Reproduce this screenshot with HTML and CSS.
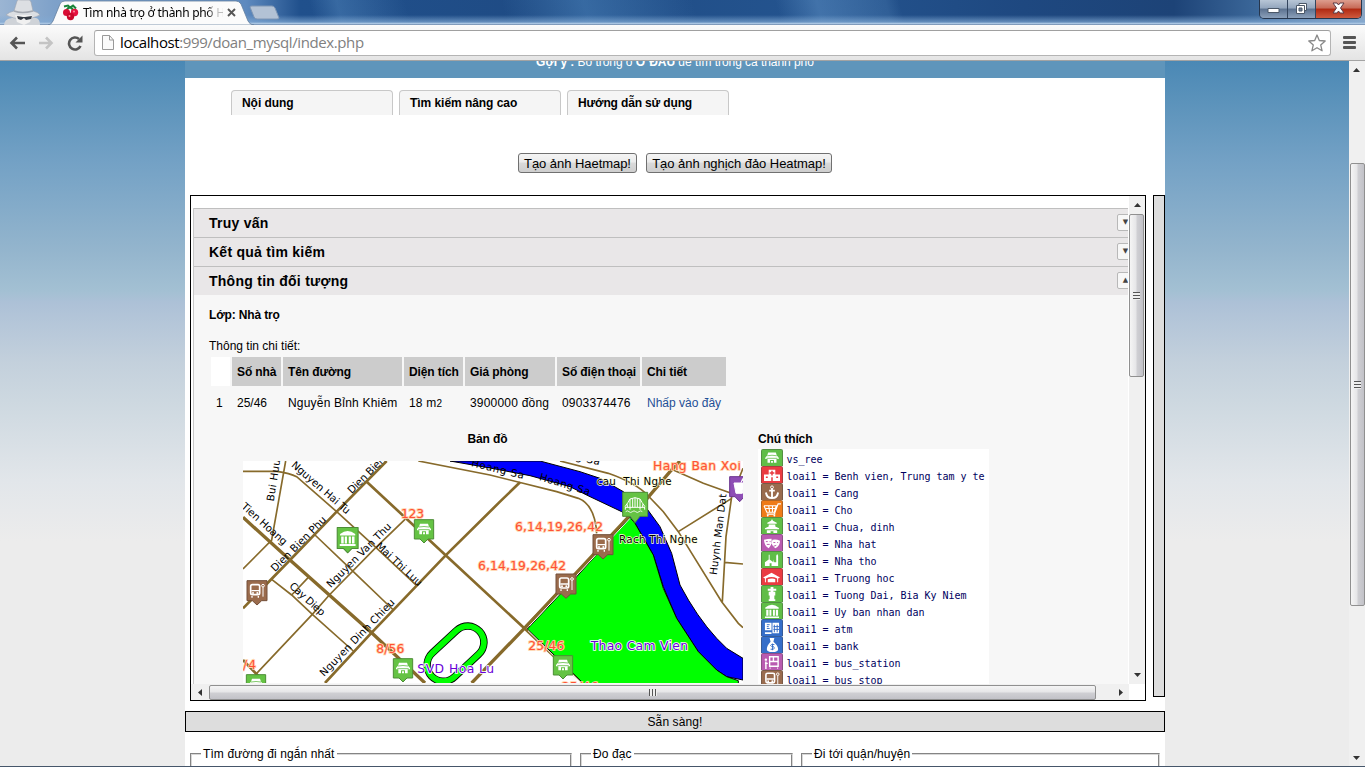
FILE: index.html
```html
<!DOCTYPE html>
<html lang="vi">
<head>
<meta charset="utf-8">
<title>Tìm nhà trọ ở thành phố Hồ Chí Minh</title>
<link rel="stylesheet" href="styles.css">
</head>
<body>
<header class="titlebar">
  <svg class="incognito" width="48" height="25" viewBox="0 0 48 25">
    <path d="M4 25q0-6 8-7l24 0q4 1 4 7z" fill="#cfd3d8"/>
    <path d="M6 15q3-3 8-4l3-10q1-2 4-1h6q3-1 4 2l2 9q5 1 7 4-7 4-17 4t-17-4z" fill="#dcdfe3" stroke="#9da5b0" stroke-width=".6"/>
    <path d="M14 11q8 3 19 0" fill="none" stroke="#a4a9b1" stroke-width="1.5"/>
    <path d="M15 15h17l-2 7-6 3-7-3z" fill="#f0f0f0"/>
    <path d="M17 16l6 1h2l7-1-1 3-5 1-2-2-3 2-3-1z" fill="#333a44"/>
  </svg>
  <div class="tab">
    <svg class="tab-shape" width="206" height="25" viewBox="0 0 206 25"><path d="M0 25q3 0 5-4l7-17q1-3 5-3h171q3 0 5 3l7 17q2 4 6 4z" fill="#fbfbfb" stroke="#65809f" stroke-width=".8"/></svg>
    <div class="tab-content">
      <svg width="17" height="17" viewBox="0 0 17 17"><path d="M2 2.500l4-1 2 2 3-2 3 3M4 8q1-4 4-5M11 8q0-4-3-5" fill="none" stroke="#19853a" stroke-width="2"/><circle cx="4.500" cy="8.500" r="3.500" fill="#d80d35"/><circle cx="12.500" cy="8.500" r="3.700" fill="#e51240"/><circle cx="8.500" cy="12.500" r="3.700" fill="#c9082b"/><circle cx="7.500" cy="12" r="1" fill="#ff8a9c"/><circle cx="12" cy="7.500" r="1" fill="#ff8a9c"/></svg>
      <span class="tab-title">Tìm nhà trọ ở thành phố H</span>
      <svg width="9" height="9" viewBox="0 0 9 9"><path d="M1 1l7 7M8 1l-7 7" stroke="#555" stroke-width="1.900"/></svg>
    </div>
  </div>
  <svg class="newtab" width="31" height="15" viewBox="0 0 31 15"><path d="M1 2q0-1 2-1h20q2 0 3 2l4 10q0 1-2 1H8q-2 0-3-2z" fill="#b3c2d5" stroke="#7e96b4"/></svg>
  <div class="window-controls">
    <div class="wc wc-min"><svg width="13" height="7" viewBox="0 0 13 7"><path d="M1 1.500h11v4H1z" fill="#fff" stroke="#4b5868"/></svg></div>
    <div class="wc wc-max"><svg width="13" height="13" viewBox="0 0 13 13"><path d="M4 1.500h7.500v7H4z" fill="#fff" stroke="#4b5868"/><path d="M1.500 3.500h8v8h-8z" fill="#fff" stroke="#4b5868"/><path d="M4 6h3v3H4z" fill="#718299" stroke="#4b5868"/></svg></div>
    <div class="wc wc-close"><svg width="13" height="12" viewBox="0 0 13 12"><path d="M1 1h4l1.500 2L8 1h4L8.500 6l3.500 5H8L6.500 9 5 11H1l3.500-5z" fill="#fff" stroke="#5b3a45"/></svg></div>
  </div>
</header>
<div class="toolbar">
  <svg width="16" height="14" viewBox="0 0 16 14"><path d="M16 7H3M8 1.500L2.500 7 8 12.500" fill="none" stroke="#555" stroke-width="2.600"/></svg>
  <svg width="16" height="14" viewBox="0 0 16 14"><path d="M1 7h12M8 1.500L13.500 7 8 12.500" fill="none" stroke="#c4c4c4" stroke-width="2.600"/></svg>
  <svg width="16" height="16" viewBox="0 0 16 16"><path d="M13.500 11A6 6 0 1 1 12 4" fill="none" stroke="#555" stroke-width="2.600"/><path d="M15.500.5v7h-7z" fill="#555"/></svg>
  <div class="address">
    <svg width="12" height="15" viewBox="0 0 12 15"><path d="M.5.500h7L11.500 5v9.500H.500zM7.500.500V5h4" fill="#fafafa" stroke="#999"/></svg>
    <span class="url"><b>localhost</b>:999/doan_mysql/index.php</span>
    <svg width="18" height="18" viewBox="0 0 18 18"><path d="M9 1l2.300 5.500 5.900.500-4.500 3.900 1.400 5.900L9 13.700l-5.100 3.100 1.400-5.900L.8 7l5.900-.5z" fill="#fff" stroke="#888" stroke-width="1.300" stroke-linejoin="round"/></svg>
  </div>
  <svg class="menu" width="13" height="13" viewBox="0 0 13 13"><path d="M1 1.500h11M1 6.500h11M1 11.500h11" stroke="#555" stroke-width="2.800" stroke-linecap="round"/></svg>
</div>

<div class="viewport">
  <main class="page">
    <div class="hint"><span><b>Gợi ý :</b> Bỏ trống ô <b>Ở ĐÂU</b> để tìm trong cả thành phố</span></div>
    <nav class="tabs"><a>Nội dung</a><a>Tìm kiếm nâng cao</a><a class="guide">Hướng dẫn sử dụng</a></nav>
    <div class="actions"><button class="b1">Tạo ảnh Haetmap!</button><button class="b2">Tạo ảnh nghịch đảo Heatmap!</button></div>
    <div class="work">
      <section class="panel">
        <div class="panel-view">
          <div class="accordion">
            <h3><span>Truy vấn</span><i>▼</i></h3>
            <h3><span>Kết quả tìm kiếm</span><i>▼</i></h3>
            <h3><span>Thông tin đối tượng</span><i>▲</i></h3>
            <div class="detail">
              <p class="layer">Lớp: Nhà trọ</p>
              <p class="info">Thông tin chi tiết:</p>
              <table>
                <tr class="head"><th></th><th>Số nhà</th><th>Tên đường</th><th>Diện tích</th><th>Giá phòng</th><th>Số điện thoại</th><th>Chi tiết</th></tr>
                <tr><td>1</td><td>25/46</td><td>Nguyễn Bỉnh Khiêm</td><td>18 m<small>2</small></td><td>3900000 đồng</td><td>0903374476</td><td><a>Nhấp vào đây</a></td></tr>
              </table>
              <div class="result">
                <div class="map-col">
                  <h4>Bản đồ</h4>
                  <svg class="map" width="500" height="222" viewBox="9 93 1500 666">
                    <defs>
                      <g id="house" fill="#fff"><path d="M-12-17H12L15-8 21-1V3H14V15H6V6H-6V15H-14V3H-21V-1L-15-8z"/><path d="M-15-7Q0-10 15-7M-17 1H17" fill="none" stroke="#66bd4c" stroke-width="2.500"/><path d="M-3 9H3V15H-3z"/></g>
                      <g id="pin-house"><path d="M-29-29H29V29H12L0 41-12 29H-29z" fill="#65c344" stroke="#4c8d36" stroke-width="3" stroke-linejoin="round"/><use href="#house"/></g>
                      <g id="bus"><rect x="-19" y="-18" width="27" height="30" rx="5" fill="none" stroke="#fff" stroke-width="5"/><path d="M-17 0H6M-15 16v5M4 16v5" stroke="#fff" stroke-width="4"/><circle cx="-12" cy="7" r="3" fill="#fff"/><circle cx="1" cy="7" r="3" fill="#fff"/><path d="M18-11V18" stroke="#fff" stroke-width="3"/><circle cx="18" cy="-15" r="4" fill="none" stroke="#fff" stroke-width="3"/></g>
                      <g id="pin-bus"><path d="M-30-30H30V30H14L0 43-14 30H-30z" fill="#9a6b4c" stroke="#74503a" stroke-width="3" stroke-linejoin="round"/><use href="#bus"/></g>
                      <g id="hall" fill="#fff"><path d="M-21-11Q0-28 21-11V-7H-21zM-18-4h7v19h-7zM-8-4h6v19h-6zM3-4h6v19H3zM12-4h7v19h-7zM-22 17H22v5H-22z"/></g>
                    </defs>
                    <rect x="9" y="93" width="1500" height="666" fill="#fff"/>
                    <g fill="none" stroke="#876a2b" stroke-width="5">
                      <path d="M137 93L95 330 9 417M9 124H110Q150 130 170 140L290 245 405 350 530 467M495 268L405 355 268 495 217 553 50 730M225 315L340 425 460 540M95 448L155 495 217 553 340 663M155 495L205 442"/>
                      <path d="M535 93L750 135 950 185 1015 205Q1065 225 1070 310M960 93L1105 130Q1190 160 1225 198L1270 245 1315 305 1445 515 1495 580 1509 593M1315 305L1475 205M1300 120L1390 160 1480 192M1509 115L1475 200 1458 320 1447 515M1453 397L1509 402"/>
                      <path stroke-width="8" d="M440 93L290 245 150 390 9 535M380 155L617 376 853 595 975 710 1030 759M255 759L395 608 617 376 780 215 840 157M9 690L75 759"/>
                      <path stroke-width="10" d="M9 262L150 390 395 608 555 759M695 759L853 595 1185 248 1290 125 1320 93"/>
                    </g>
                    <path d="M630 93H900L1020 125 1080 145 1150 185 1220 235 1260 290 1295 370 1320 465Q1370 560 1430 625L1460 655 1509 685V750L1460 740 1430 720 1375 665 1310 565 1270 470 1240 375 1185 280 1145 245 1050 200 990 170 870 137 750 114z" fill="#00f" stroke="#000" stroke-width="3"/>
                    <path d="M1170 262L1185 280 1240 375 1270 475 1310 565 1375 665 1430 720 1460 740 1495 752V765H1035L862 597 1010 440z" fill="#0f0" stroke="#000" stroke-width="3"/>
                    <path d="M1168 257L856 592" stroke="#876a2b" stroke-width="9"/><path d="M1170 265L868 588M864 602L1030 765" stroke="#fff" stroke-width="3"/>
                    <g stroke-linecap="round" fill="none"><path d="M683 637L610 705" stroke="#000" stroke-width="120"/><path d="M683 637L610 705" stroke="#0f0" stroke-width="115"/><path d="M683 637L610 705" stroke="#000" stroke-width="80"/><path d="M683 637L610 705" stroke="#fff" stroke-width="75"/></g>
                    <g class="street">
                      <text transform="translate(101 215) rotate(-81)" textLength="127">Bui Huu</text>
                      <text transform="translate(152 108) rotate(41)" textLength="222">Nguyen Hai Tu</text>
                      <text transform="translate(335 193) rotate(-45)" textLength="145">Dien Bien</text>
                      <text transform="translate(2 232) rotate(42)" textLength="172">Tien Hoang</text>
                      <text transform="translate(105 427) rotate(-45)" textLength="220">Dien Bien Phu</text>
                      <text transform="translate(272 475) rotate(-45)" textLength="260">Nguyen Van Thu</text>
                      <text transform="translate(406 350) rotate(43)" textLength="176">Mai Thi Luu</text>
                      <text transform="translate(146 471) rotate(42)" textLength="132">Cay Diep</text>
                      <text transform="translate(252 741) rotate(-46)" textLength="308">Nguyen Dinh Chieu</text>
                      <text transform="translate(692 108) rotate(14)" textLength="162">Hoang Sa</text>
                      <text transform="translate(896 150) rotate(17)" textLength="158">Hoang Sa</text>
                      <text transform="translate(920 67) rotate(14)" textLength="162">Hoang Sa</text>
                      <text transform="translate(1430 436) rotate(-83)" textLength="245">Huynh Man Dat</text>
                    </g>
                    <g transform="translate(323 324) scale(1.080)"><path d="M-29-29H29V29H12L0 41-12 29H-29z" fill="#65c344" stroke="#4c8d36" stroke-width="3" stroke-linejoin="round"/><use href="#hall"/></g>
                    <use href="#pin-house" x="552" y="298"/><use href="#pin-house" x="489" y="715"/><use href="#pin-house" x="48" y="763"/><use href="#pin-house" x="969" y="706"/>
                    <use href="#pin-bus" x="51" y="482"/><use href="#pin-bus" x="1089" y="344"/><use href="#pin-bus" x="978" y="462"/>
                    <g transform="translate(1185 225)"><path d="M-37-38H38V34H15L0 53-15 34H-37z" fill="#65c344" stroke="#4c8d36" stroke-width="3" stroke-linejoin="round"/><path d="M-30 5Q-20-8-15-18Q0-26 15-18Q20-8 30 5M-30 7H30M-15-18V14M15-18V14M-23-2V7M23-2V7M-7-20V7M0-22V7M7-20V7M-29 7V14M29 7V14" fill="none" stroke="#fff" stroke-width="3"/><path d="M-28 20q5-5 10 0t10 0 10 0 10 0 10 0" fill="none" stroke="#fff" stroke-width="2.500"/></g>
                    <g transform="translate(1499 170)"><path d="M-30-30H30V30H14L0 45-14 30H-30z" fill="#8e4db5" stroke="#6b3690" stroke-width="3"/><path d="M-17-11H13L8 20H-11zM4-12l5-12 9-4" fill="#fff" stroke="#fff" stroke-width="3"/></g>
                    <g class="place"><text x="1070" y="165" textLength="225" xml:space="preserve">cau  Thi Nghe</text><text x="1137" y="338" textLength="236">Rach Thi Nghe</text></g>
                    <g class="number">
                      <text x="483" y="264" textLength="69">123</text><text x="409" y="669" textLength="84">8/56</text><text x="9" y="717" textLength="39">/4</text>
                      <text x="825" y="303" textLength="264">6,14,19,26,42</text><text x="714" y="420" textLength="264">6,14,19,26,42</text><text x="865" y="660" textLength="108">25/46</text><text x="965" y="783" textLength="110">25/46</text><text x="1239" y="119" textLength="264">Hang Ban Xoi</text>
                    </g>
                    <g class="landmark"><text x="532" y="729" textLength="230">SVD Hoa Lu</text><text x="1052" y="660" textLength="292">Thao Cam Vien</text></g>
                  </svg>
                </div>
                <div class="legend-col">
                  <h4>Chú thích</h4>
                  <ul class="legend">
                    <li><svg class="ic g" viewBox="-31 -25 62 50"><use href="#house"/></svg><span>vs_ree</span></li>
                    <li><svg class="ic r" viewBox="0 0 21 17"><path d="M2 8h5V3h7v5h5v7H2z" fill="#fff"/><path d="M10.500 4v5M8 6.500h5M4 11h2M15 11h2M10.500 11v4" stroke="#e83b40" stroke-width="1.600"/></svg><span>loai1 = Benh vien, Trung tam y te</span></li>
                    <li><svg class="ic n" viewBox="0 0 21 17"><path d="M10.500 5v10M7.500 7h6M4 9q1 6 6.500 6T17 9" fill="none" stroke="#fff" stroke-width="2"/><circle cx="10.500" cy="3.500" r="1.500" fill="none" stroke="#fff"/></svg><span>loai1 = Cang</span></li>
                    <li><svg class="ic o" viewBox="0 0 21 17"><path d="M2 5h13l-2 7H5L2 5M4 8h10M7 5l1 7M11 5v7M13 14l4-11h3M5 14h9" fill="none" stroke="#fff" stroke-width="1.200"/><circle cx="6" cy="15.500" r="1" fill="#fff"/><circle cx="13" cy="15.500" r="1" fill="#fff"/></svg><span>loai1 = Cho</span></li>
                    <li><svg class="ic g" viewBox="0 0 21 17"><path d="M10.500 1l1 2 4 2v1h-10V5l4-2zM7 7h7v2l4 2v1H3v-1l4-2zM5 13h11v3h-4v-2H9v2H5z" fill="#fff"/></svg><span>loai1 = Chua, dinh</span></li>
                    <li><svg class="ic p" viewBox="0 0 21 17"><path d="M2 5q4-1 8-1 1 6-3 10-5-3-5-9zM11 5q4-1 8 1 0 6-5 8-3-2-4-5z" fill="#fff"/><path d="M4 7h2M8 7h1M5 10h3M12 8h2M16 8h1M12 12l3-1" stroke="#b55aaa"/></svg><span>loai1 = Nha hat</span></li>
                    <li><svg class="ic g" viewBox="0 0 21 17"><path d="M3 15v-4l4-3V3h1v5l4 3V8l1 3h2V4l1-2 1 2v11h-7v-3H8v3z" fill="#fff"/></svg><span>loai1 = Nha tho</span></li>
                    <li><svg class="ic r" viewBox="0 0 21 17"><path d="M1 9l9-5 9 5-2 1v4h-1v-4q-6-3-12 0v4H3v-4zM6 11q5-2 8 0v3H6z" fill="#fff"/></svg><span>loai1 = Truong hoc</span></li>
                    <li><svg class="ic g" viewBox="0 0 21 17"><path d="M9 1h3v2h3v2h-3v1h2v4h-1v4h1v2H7v-2h1v-4H7V6h2V5H6V3h3z" fill="#fff"/></svg><span>loai1 = Tuong Dai, Bia Ky Niem</span></li>
                    <li><svg class="ic g" viewBox="-31 -25 62 50"><use href="#hall"/></svg><span>loai1 = Uy ban nhan dan</span></li>
                    <li><svg class="ic b" viewBox="0 0 21 17"><path d="M3 3h7v8H3zM11 3h7v11h-7zM3 13h7v2H3z" fill="#fff"/><path d="M5 5h3M5 7h2M5 9h3M13 5v8M16 5v8M12 7h6M12 10h6" stroke="#356dc7"/></svg><span>loai1 = atm</span></li>
                    <li><svg class="ic b" viewBox="0 0 21 17"><path d="M8 1h5l-1 4q5 4 5 8 0 3-6 3t-6-3q0-4 4-8z" fill="#fff"/><path d="M13 8h-3q-2 1 0 2h2q2 2 0 3H9M11 7v7" fill="none" stroke="#356dc7"/></svg><span>loai1 = bank</span></li>
                    <li><svg class="ic p" viewBox="0 0 21 17"><path d="M8 3h9v10H8zM4 8v8M3 10h3M8 15h1M16 15h1M8 8h9M12 3v5" fill="none" stroke="#fff" stroke-width="1.500"/><circle cx="4" cy="6" r="1.300" fill="#fff"/></svg><span>loai1 = bus_station</span></li>
                    <li><svg class="ic n" viewBox="-31 -25 62 50"><use href="#bus"/></svg><span>loai1 = bus_stop</span></li>
                  </ul>
                </div>
              </div>
            </div>
          </div>
        </div>
        <div class="vbar"><span class="arrow"><svg width="7" height="4" viewBox="0 0 7 4"><path d="M0 4L3.500 0 7 4z"/></svg></span><div class="thumb"><i></i></div><span class="arrow low"><svg width="7" height="4" viewBox="0 0 7 4"><path d="M0 0L3.500 4 7 0z"/></svg></span></div>
        <div class="hbar"><span class="arrow"><svg width="4" height="7" viewBox="0 0 4 7"><path d="M4 0L0 3.500 4 7z"/></svg></span><div class="thumb"><i></i></div><span class="arrow"><svg width="4" height="7" viewBox="0 0 4 7"><path d="M0 0L4 3.500 0 7z"/></svg></span></div>
      </section>
      <aside class="splitter"></aside>
    </div>
    <div class="status">Sẵn sàng!</div>
    <div class="tools">
      <fieldset><legend>Tìm đường đi ngắn nhất</legend></fieldset>
      <fieldset><legend>Đo đạc</legend></fieldset>
      <fieldset><legend>Đi tới quận/huyện</legend></fieldset>
    </div>
  </main>
  <div class="vbar page-bar"><span class="arrow"><svg width="7" height="4" viewBox="0 0 7 4"><path d="M0 4L3.500 0 7 4z"/></svg></span><div class="thumb"><i></i></div><span class="arrow low"><svg width="7" height="4" viewBox="0 0 7 4"><path d="M0 0L3.500 4 7 0z"/></svg></span></div>
</div>
</body>
</html>
```
FILE: styles.css
```css
* { box-sizing: border-box; }
body {
  margin: 0; width: 1365px; height: 767px; overflow: hidden;
  display: flex; flex-direction: column;
  font: 12px "Liberation Sans", Arial, sans-serif; color: #000;
  border-bottom: 1px solid #46566a;
}
svg { display: block; flex: none; }

/* browser chrome */
.titlebar {
  height: 25px; flex: none; display: flex; align-items: flex-start;
  background:
    linear-gradient(rgba(255,255,255,0) 60%, rgba(130,170,212,.7) 88%, #a9c5e2 94%, #6d87a8),
    linear-gradient(75deg, transparent 23%, rgba(110,165,215,.3) 25%, transparent 30%, transparent 37%, rgba(90,150,205,.4) 43%, transparent 51%, transparent 57%, rgba(110,160,210,.4) 60%, rgba(90,140,190,.25) 65%, transparent 66%),
    linear-gradient(90deg, #9bb5d3 0, #7ea1c9 4%, #5e8abf 18%, #20508c 22%, #1f4b84 40%, #24548f 60%, #1e4880 75%, #1d4377 86%, #3b6799 92%, #8ba5c2 100%);
}
.tab { width: 206px; height: 25px; display: grid; flex: none; }
.tab-shape, .tab-content { grid-area: 1 / 1; }
.tab-content { display: flex; align-items: center; padding-left: 14px; z-index: 1; }
.tab-title {
  width: 140px; margin-left: 4px; white-space: nowrap;
  font: 12px "Noto Sans", sans-serif; letter-spacing: -.3px;
  -webkit-mask-image: linear-gradient(90deg, #000 88%, rgba(0,0,0,.25) 96%);
  mask-image: linear-gradient(90deg, #000 88%, rgba(0,0,0,.25) 96%);
}
.tab-content svg:last-child { margin-left: 4px; }
.newtab { margin: 5px 0 0 -5px; }
.window-controls {
  margin-left: auto; margin-right: 3px; width: 103px; height: 19px;
  display: flex; border: 1px solid #26364d; border-top: 0; border-radius: 0 0 5px 5px; overflow: hidden;
}
.wc { display: flex; align-items: center; justify-content: center; width: 28px; padding-bottom: 2px; border-right: 1px solid #33455e; background: linear-gradient(#b8c6d6, #93a6bd 45%, #5c7290 50%, #8ba0ba); }
.wc-min { align-items: flex-end; padding-bottom: 4px; }
.wc-close { flex: 1; border-right: 0; background: linear-gradient(#dd9d8e, #c76a57 45%, #b02912 50%, #cf5a3e); }
.toolbar {
  height: 36px; flex: none; display: flex; align-items: center; gap: 13px; padding: 0 9px;
  background: linear-gradient(#fbfbfb, #e4e4e4); border-bottom: 1px solid #a3a3a3;
}
.address {
  flex: 1; height: 26px; display: flex; align-items: center; padding: 0 4px 0 7px; margin-left: -2px;
  background: #fff; border: 1px solid #b4b4b4; border-top-color: #a0a0a0; border-radius: 3px;
}
.url { flex: 1; margin-left: 6px; margin-top: -2px; font: 15px "Open Sans", sans-serif; letter-spacing: -.4px; color: #808080; }
.url b { font-weight: normal; color: #000; }
.menu { margin: 0 0 0 -1px; }

/* page */
.viewport {
  flex: 1; min-height: 0; display: flex; padding-left: 185px; justify-content: space-between;
  background: linear-gradient(#4a88b5 0, #5c93bb 42px, #73a1c5 100px, #94b5cd 190px, #a3c0d3 230px, #adc1d7 242px, #c3d0dc 300px, #cdd8e0 340px, #e2e6ea 420px, #ececec 480px);
}
.page { width: 980px; background: #fff; overflow: hidden; }
.hint { height: 17px; background: #5f95bb; color: #fff; text-align: center; overflow: hidden; }
.hint span { display: block; margin-top: -6px; line-height: 15px; letter-spacing: -.05px; }
.tabs { display: flex; gap: 6px; padding: 12px 0 0 46px; }
.tabs a { width: 162px; height: 25px; padding: 0 0 0 10px; line-height: 24px; font-weight: bold; letter-spacing: -.05px; background: #f5f5f5; border: 1px solid #c8c8c8; border-bottom: 0; border-radius: 4px 4px 0 0; }
.tabs .guide { letter-spacing: -.15px; }
.actions { display: flex; gap: 9px; padding: 38px 0 22px 333px; }
.actions button { height: 20px; padding: 0; font: 13px "Liberation Sans", Arial, sans-serif; letter-spacing: -.05px; border: 1px solid #707070; border-radius: 3px; background: linear-gradient(#f4f4f4, #ebebeb 45%, #dadada 50%, #cecece); }
.actions .b1 { width: 119px; }
.actions .b2 { width: 186px; }
.work { display: flex; justify-content: space-between; padding-left: 5px; height: 506px; }
.panel { width: 956px; height: 506px; border: 1px solid #000; display: grid; grid-template: 488px 16px / 938px 16px; }
.panel-view { overflow: hidden; padding: 12px 1px 0 2px; }
.accordion { width: 945px; border-left: 1px solid #c8c8c8; margin-right: -10px; }
.panel-view { clip-path: inset(0 1px 0 0); }
.accordion h3 { margin: 0; height: 29px; border-top: 1px solid #bfbfbf; background: #e9e7e8; display: flex; align-items: center; justify-content: space-between; padding: 0 4px 0 15px; font-size: 14px; letter-spacing: .26px; }
.accordion h3 i { width: 17px; height: 17px; margin-top: -2px; border: 1px solid #b8b8b8; border-radius: 2px; background: #f7f7f7; font: 7px/15px "DejaVu Sans", sans-serif; letter-spacing: 0; color: #444; text-align: center; }
.detail { height: 420px; background: #f7f7f7; padding: 13px 0 0 15px; }
.detail p { margin: 0; line-height: 15px; }
.layer { font-weight: bold; letter-spacing: -.15px; }
.detail .info { margin-top: 16px; }
table { width: 519px; margin-top: 1px; border-spacing: 2px; table-layout: fixed; margin-left: 0; }
.head th { height: 29px; background: #ccc; text-align: left; padding: 0 0 0 5px; white-space: nowrap; letter-spacing: -.1px; }
.head th:nth-child(1) { width: 19px; background: #fff; }
.head th:nth-child(2) { width: 49px; }
.head th:nth-child(3) { width: 119px; }
.head th:nth-child(4) { width: 59px; }
.head th:nth-child(5) { width: 90px; }
.head th:nth-child(6) { width: 83px; }
td { height: 28px; padding: 2px 0 0 5px; white-space: nowrap; }
td:nth-child(n+3):nth-child(-n+6) { letter-spacing: .2px; }
td small { font-size: 10px; }
td a { color: #1f4f96; }
.result { display: flex; margin-top: 14px; }
h4 { margin: 0; font-size: 12px; line-height: 15px; letter-spacing: -.1px; }
.map-col { width: 549px; padding-left: 34px; }
.map-col h4 { width: 489px; text-align: center; margin-bottom: 14px; }
.map text { font-family: "DejaVu Sans", sans-serif; }
.street text { font-size: 31px; }
.place text { font-size: 31px; paint-order: stroke; stroke: #ffffd8; stroke-width: 4px; white-space: pre; }
.number text { font-size: 37px; fill: #ff5035; paint-order: stroke; stroke: #ffd3aa; stroke-width: 5px; }
.landmark text { font-size: 37px; fill: #6a00d8; paint-order: stroke; stroke: #fff; stroke-width: 5px; }
.legend-col { width: 231px; }
.legend { list-style: none; margin: 2px 0 0; padding: 0 0 0 3px; background: #fff; width: 231px; }
.legend li { height: 17px; display: flex; gap: 3.500px; white-space: pre; font: 10px/16px "DejaVu Sans Mono", monospace; color: #000060; letter-spacing: -.02px; }
.legend span { padding-top: 3px; }
.ic { width: 22px; height: 17px; border: solid rgba(60,60,60,.35); border-width: 1px 1px 0; border-radius: 2px 2px 0 0; }
.g { background: #60bd47; } .r { background: #ea3b41; } .n { background: #996b4e; }
.o { background: #ef7b18; } .p { background: #b95bb0; } .b { background: #356ec9; }

/* scrollbars */
.vbar { width: 16px; height: 100%; background: #f0f0f0; display: flex; flex-direction: column; align-items: flex-start; }
.arrow { flex: none; width: 17px; height: 18px; display: flex; align-items: center; justify-content: center; }
.arrow svg { fill: #333; }
.low { margin-top: auto; }
.thumb { display: flex; align-items: center; justify-content: center; border: 1px solid #909090; border-radius: 2px; }
.vbar .thumb { width: 15px; height: 163px; background: linear-gradient(90deg, #f5f5f5, #e6e6e8 45%, #cfcfd3 55%, #c2c2c8); }
.thumb i { width: 7px; height: 8px; background: repeating-linear-gradient(#555 0 1px, #eee 1px 3px); }
.page-bar { align-items: flex-end; }
.page-bar .arrow { height: 17px; }
.page-bar .thumb { height: 443px; margin-top: 85px; }
.hbar { display: flex; align-items: center; background: #f0f0f0; }
.hbar .arrow:first-child { width: 18px; }
.hbar .thumb { width: 887px; height: 15px; background: linear-gradient(#f5f5f5, #e6e6e8 45%, #cfcfd3 55%, #c2c2c8); }
.hbar .thumb i { width: 8px; height: 7px; background: repeating-linear-gradient(90deg, #555 0 1px, #eee 1px 3px); }
.hbar .arrow:last-child { margin-left: auto; }
.splitter { width: 12px; height: 502px; background: #ddd; border: 1px solid #000; }
.status { height: 21px; margin-top: 10px; border: 1px solid #000; background: #ddd; text-align: center; line-height: 20px; letter-spacing: .1px; }
.tools { display: grid; grid-template-columns: 382px 213px 359px; gap: 8px; padding: 14px 5px 0; }
fieldset { margin: 0; padding: 0 10px 0 9px; height: 60px; border: 2px groove #d8d8d8; min-width: 0; }
legend { padding: 0 2px; line-height: 16px; letter-spacing: .1px; }
```
